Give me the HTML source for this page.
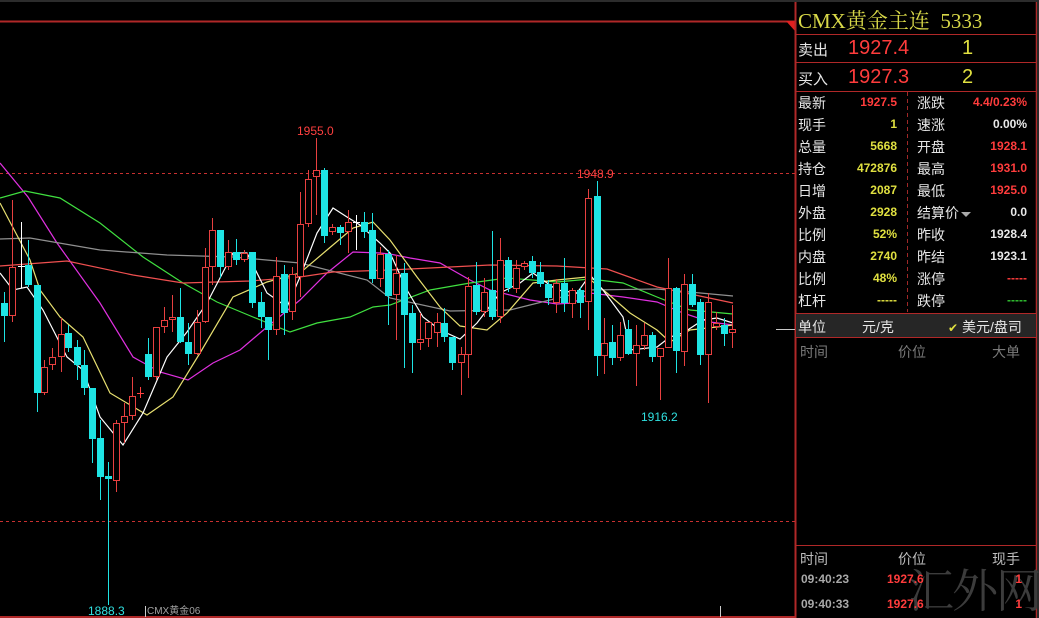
<!DOCTYPE html>
<html><head><meta charset="utf-8"><style>
*{margin:0;padding:0;box-sizing:border-box}
html,body{width:1039px;height:618px;background:#000;overflow:hidden}
body{position:relative;font-family:"Liberation Sans","Noto Sans CJK SC",sans-serif}
.a{position:absolute;white-space:nowrap}
.lab{color:#e6e6e6;font-size:14px}
.v{font-size:12px;font-weight:bold;text-align:right}
.y{color:#e0e040}.r{color:#ff3c3c}.w{color:#e8e8e8}.g{color:#9a9a9a}
</style></head><body>
<div class="a" style="left:0;top:0;width:1039px;height:2px;background:#2c2c2c"></div>
<svg class="a" style="left:0;top:0" width="1039" height="618">
<line x1="0" y1="21.5" x2="795" y2="21.5" stroke="#b02828" stroke-width="2"/>
<polygon points="786,21 795,21 795,31" fill="#e02020"/>
<line x1="795.5" y1="2" x2="795.5" y2="618" stroke="#b02828" stroke-width="2"/>
<line x1="1036.5" y1="2" x2="1036.5" y2="618" stroke="#b02828" stroke-width="1.5"/>
<rect x="1037" y="0" width="2" height="618" fill="#2a2a2a"/>
<line x1="0" y1="617" x2="795" y2="617" stroke="#b02828" stroke-width="2"/>
<line x1="0" y1="173.5" x2="795" y2="173.5" stroke="#c83030" stroke-dasharray="3,3"/>
<line x1="0" y1="521.5" x2="795" y2="521.5" stroke="#c83030" stroke-dasharray="3,3"/>
<line x1="776" y1="329.5" x2="795" y2="329.5" stroke="#c8c8c8"/>
<line x1="720.5" y1="606" x2="720.5" y2="617" stroke="#ccc"/>
<line x1="145.5" y1="606" x2="145.5" y2="617" stroke="#ccc"/>
<g fill="none" stroke-width="1.2">
<polyline stroke="#e030e0" points="0,163 28,197 57,243 100,303 133,357 160,372 188,380 213,363 240,350 267,327 300,300 327,273 353,252 380,253 390,254 410,258 440,263 470,280 490,290 530,300 557,304 573,303 590,293 623,297 657,302 683,313 710,322 733,325"/>
<polyline stroke="#40e040" points="0,198 25,191 60,198 100,223 143,257 183,283 217,302 253,317 290,332 317,323 350,317 373,307 390,305 430,290 470,283 507,278 557,282 590,279 623,283 657,297 690,310 733,314"/>
<polyline stroke="#909090" points="0,239 30,238 100,250 167,255 233,257 300,263 367,280 390,298 450,311 510,310 590,290 657,289 733,296"/>
<polyline stroke="#f05050" points="0,266 67,261 133,275 183,283 250,281 300,277 333,272 390,270 490,265 557,266 607,269 657,287 733,303"/>
<polyline stroke="#e8e070" points="0,203 30,260 40,290 60,317 83,337 110,393 147,415 173,397 200,353 233,297 267,282 300,273 327,250 353,228 373,222 390,240 417,277 440,307 460,326 487,330 507,313 533,283 557,280 587,277 607,293 630,313 657,330 670,342 690,330 717,327 733,325"/>
<polyline stroke="#ffffff" points="0,273 13,290 27,287 43,310 67,357 83,370 100,417 123,445 143,413 167,357 187,332 207,303 233,253 247,253 267,293 287,307 300,277 317,233 333,208 347,217 360,225 380,243 390,253 407,290 423,317 440,330 460,339 477,323 500,293 520,283 533,273 557,290 577,293 590,275 603,290 623,317 630,350 657,347 670,337 683,333 703,320 717,318 733,323"/>
</g>
<g id="c"></g>
<text x="297" y="135" fill="#ff4040" font-size="12" font-family="Liberation Sans">1955.0</text>
<text x="577" y="178" fill="#ff4040" font-size="12" font-family="Liberation Sans">1948.9</text>
<text x="641" y="421" fill="#30e0e0" font-size="12" font-family="Liberation Sans">1916.2</text>
<text x="88" y="615" fill="#30e0e0" font-size="12" font-family="Liberation Sans">1888.3</text>
<text x="147" y="614" fill="#a0a0a0" font-size="10" font-family="Liberation Sans,Noto Sans CJK SC">CMX黄金06</text>
<line x1="795" y1="34.5" x2="1036" y2="34.5" stroke="#b02828"/>
<line x1="795" y1="62.5" x2="1036" y2="62.5" stroke="#b02828"/>
<line x1="795" y1="91.5" x2="1036" y2="91.5" stroke="#b02828"/>
<line x1="907.5" y1="92" x2="907.5" y2="312" stroke="#a02828" stroke-dasharray="4,3"/>
<rect x="796" y="313" width="240" height="24" fill="#262626"/>
<line x1="795" y1="313.5" x2="1036" y2="313.5" stroke="#b02828"/>
<line x1="795" y1="337.5" x2="1036" y2="337.5" stroke="#b02828"/>
<line x1="795" y1="545.5" x2="1036" y2="545.5" stroke="#b02828"/>
<polygon points="961,212 971,212 966,217" fill="#aaa"/>
</svg>
<script>
var d=[[4,303,316,292,342,'c'],[12,267,316,200,322,'r'],[21,266,266,222,288,'x'],[28,265,285,240,287,'c'],[37,285,393,285,412,'c'],[44,367,393,360,395,'r'],[52,357,365,348,370,'r'],[61,334,357,318,372,'r'],[68,333,348,325,352,'c'],[77,347,365,340,380,'c'],[84,365,388,350,395,'c'],[92,388,439,388,463,'c'],[100,438,477,420,500,'c'],[108,476,479,462,605,'c'],[116,423,481,420,492,'r'],[124,416,423,403,443,'r'],[132,396,416,377,420,'r'],[140,393,393,387,398,'y'],[148,354,377,338,380,'c'],[156,327,377,327,380,'r'],[164,320,327,307,333,'r'],[172,317,320,295,332,'r'],[180,317,342,288,343,'c'],[188,342,354,323,365,'c'],[197,322,354,310,355,'r'],[205,267,322,248,323,'r'],[212,230,267,218,285,'r'],[220,230,267,230,278,'c'],[228,252,267,240,270,'r'],[236,252,260,239,265,'c'],[244,253,260,250,262,'r'],[252,252,303,252,308,'c'],[261,302,317,292,328,'c'],[268,317,330,317,360,'c'],[276,276,330,257,335,'r'],[284,274,313,265,335,'c'],[292,274,312,267,320,'r'],[300,224,277,192,297,'r'],[308,179,224,170,227,'r'],[316,170,177,138,215,'r'],[324,170,236,168,243,'c'],[332,227,232,224,235,'r'],[340,227,233,225,245,'c'],[348,222,232,210,253,'r'],[356,222,222,215,250,'x'],[364,222,232,212,238,'c'],[372,230,279,213,283,'c'],[380,254,279,247,287,'r'],[388,254,296,250,325,'c'],[396,273,295,255,340,'r'],
[404,273,315,263,368,'c'],[412,313,343,305,373,'c'],[420,339,343,313,350,'r'],[428,322,339,322,347,'r'],[437,322,333,313,347,'r'],[444,323,337,308,342,'c'],[452,337,363,337,370,'c'],[461,354,363,347,395,'r'],[468,286,355,277,378,'r'],[476,285,312,262,315,'c'],[484,292,312,278,317,'r'],[492,290,317,231,320,'c'],[500,260,317,238,323,'r'],[508,260,288,257,292,'c'],[516,268,289,260,293,'r'],[524,263,267,261,270,'r'],[532,261,273,256,278,'c'],[540,272,284,262,287,'c'],[548,284,298,280,305,'c'],[556,283,303,279,313,'r'],[564,283,303,258,312,'c'],[572,290,304,288,318,'r'],[580,290,303,287,318,'c'],[588,198,302,189,330,'r'],[597,196,356,181,376,'c'],[604,343,356,318,374,'r'],[612,342,358,325,365,'c'],[620,335,358,322,361,'r'],[628,329,354,320,355,'c'],[636,345,354,325,386,'r'],[644,335,346,323,350,'r'],[652,335,357,332,362,'c'],[660,348,357,348,400,'r'],[668,288,348,258,348,'r'],[676,288,351,287,373,'c'],[684,284,352,274,366,'r'],[692,284,305,274,307,'c'],[700,302,355,299,365,'c'],[708,302,355,293,403,'r'],[716,323,327,312,330,'r'],[724,325,334,318,346,'c'],[732,329,333,305,348,'r']];
var s='';d.forEach(function(k){var x=k[0],t=k[1],b=k[2],h=k[3],l=k[4],ty=k[5];
var col=ty=='c'?'#1ee4e4':ty=='r'?'#e84040':ty=='x'?'#ffffff':'#ff4040';
s+='<line x1="'+(x+.5)+'" y1="'+h+'" x2="'+(x+.5)+'" y2="'+l+'" stroke="'+col+'"/>';
if(ty=='c')s+='<rect x="'+(x-3)+'" y="'+t+'" width="7" height="'+Math.max(2,b-t)+'" fill="'+col+'"/>';
else if(ty=='r')s+='<rect x="'+(x-2.5)+'" y="'+(t+.5)+'" width="6" height="'+Math.max(1,b-t-1)+'" fill="#000" stroke="'+col+'"/>';
else s+='<line x1="'+(x-3)+'" y1="'+(t+.5)+'" x2="'+(x+4)+'" y2="'+(t+.5)+'" stroke="'+col+'"/>';});
document.getElementById('c').outerHTML='<g>'+s+'</g>';
</script>
<div class="a" style="left:798px;top:5px;font-size:21px;color:#d8d848;font-family:'Liberation Serif','Noto Serif CJK SC',serif">CMX黄金主连&nbsp;&nbsp;5333</div>
<div class="a lab" style="left:798px;top:39px;font-size:15px">卖出</div>
<div class="a r" style="left:848px;top:37px;font-size:20px">1927.4</div>
<div class="a y" style="left:962px;top:37px;font-size:20px">1</div>
<div class="a lab" style="left:798px;top:68px;font-size:15px">买入</div>
<div class="a r" style="left:848px;top:66px;font-size:20px">1927.3</div>
<div class="a y" style="left:962px;top:66px;font-size:20px">2</div>
<div id="grid"></div>
<script>
var L=[['最新','1927.5','r','涨跌','4.4/0.23%','r'],['现手','1','y','速涨','0.00%','w'],['总量','5668','y','开盘','1928.1','r'],['持仓','472876','y','最高','1931.0','r'],['日增','2087','y','最低','1925.0','r'],['外盘','2928','y','结算价','0.0','w'],['比例','52%','y','昨收','1928.4','w'],['内盘','2740','y','昨结','1923.1','w'],['比例','48%','y','涨停','-----','r'],['杠杆','-----','y','跌停','-----','gr']];
var h='';L.forEach(function(r,i){var y=93+i*22;
h+='<div class="a lab" style="left:798px;top:'+y+'px">'+r[0]+'</div>';
h+='<div class="a v '+r[2]+'" style="left:820px;width:77px;top:'+(y+2)+'px">'+r[1]+'</div>';
h+='<div class="a lab" style="left:917px;top:'+y+'px">'+r[3]+'</div>';
h+='<div class="a v '+(r[5]=='gr'?'':r[5])+'" style="left:950px;width:77px;top:'+(y+2)+'px;'+(r[5]=='gr'?'color:#30c030':'')+'">'+r[4]+'</div>';});
document.getElementById('grid').outerHTML=h;
</script>
<div class="a lab" style="left:798px;top:317px">单位</div>
<div class="a lab" style="left:862px;top:317px">元/克</div>
<div class="a lab" style="left:948px;top:317px"><span style="color:#e0e040;font-size:12px">✔</span> 美元/盘司</div>
<div class="a g" style="left:800px;top:342px;font-size:14px;color:#7a7a7a">时间</div>
<div class="a g" style="left:898px;top:342px;font-size:14px;color:#7a7a7a">价位</div>
<div class="a g" style="left:992px;top:342px;font-size:14px;color:#7a7a7a">大单</div>
<div class="a" style="left:908px;top:563px;font-size:46px;line-height:50px;color:#3c3c3c;font-family:'Noto Serif CJK SC',serif;letter-spacing:-2px">汇外网</div>
<div class="a" style="left:800px;top:549px;font-size:14px;color:#bdbdbd">时间</div>
<div class="a" style="left:898px;top:549px;font-size:14px;color:#bdbdbd">价位</div>
<div class="a" style="left:992px;top:549px;font-size:14px;color:#bdbdbd">现手</div>
<div class="a v" style="left:801px;top:572px;color:#a8a8a8;text-align:left">09:40:23</div>
<div class="a v r" style="left:887px;top:572px;text-align:left">1927.6</div>
<div class="a v r" style="left:1000px;width:22px;top:572px">1</div>
<div class="a v" style="left:801px;top:597px;color:#a8a8a8;text-align:left">09:40:33</div>
<div class="a v r" style="left:887px;top:597px;text-align:left">1927.6</div>
<div class="a v r" style="left:1000px;width:22px;top:597px">1</div>
</body></html>
